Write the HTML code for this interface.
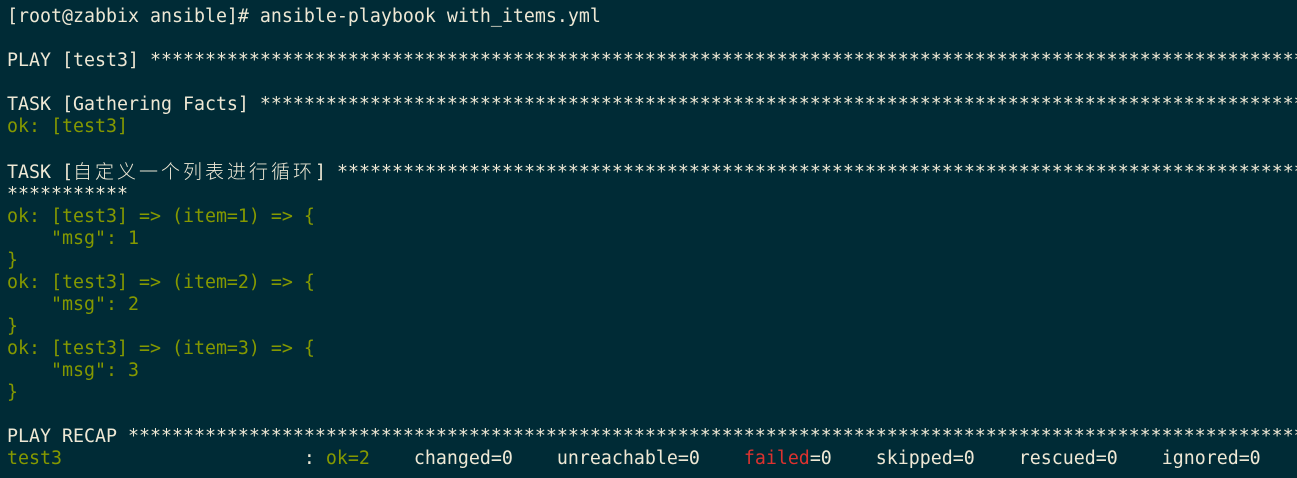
<!DOCTYPE html>
<html><head><meta charset="utf-8"><style>
html,body{margin:0;padding:0;background:#002b36;width:1297px;height:478px;overflow:hidden}
pre{margin:0;padding:6px 0 0 7px;font-family:"DejaVu Sans Mono","Liberation Mono",monospace;font-size:18.27px;line-height:22px;color:#eee8d5;white-space:pre;overflow:hidden;width:1290px}
.g{color:#859900}.r{color:#dc322f}
.cn{font-family:"Noto Sans CJK SC","WenQuanYi Zen Hei",sans-serif;letter-spacing:3px;font-size:19px;font-weight:300}
</style></head><body><pre>[root@zabbix ansible]# ansible-playbook with_items.yml

PLAY [test3] ****************************************************************************************************************

TASK [Gathering Facts] ******************************************************************************************************
<span class="g">ok: [test3]</span>

TASK [<span class="cn">自定义一个列表进行循环</span>] ************************************************************************************************
***********
<span class="g">ok: [test3] =&gt; (item=1) =&gt; {
    "msg": 1
}
ok: [test3] =&gt; (item=2) =&gt; {
    "msg": 2
}
ok: [test3] =&gt; (item=3) =&gt; {
    "msg": 3
}</span>

PLAY RECAP ******************************************************************************************************************
<span class="g">test3</span>                      : <span class="g">ok=2</span>    changed=0    unreachable=0    <span class="r">failed</span>=0    skipped=0    rescued=0    ignored=0
</pre></body></html>
